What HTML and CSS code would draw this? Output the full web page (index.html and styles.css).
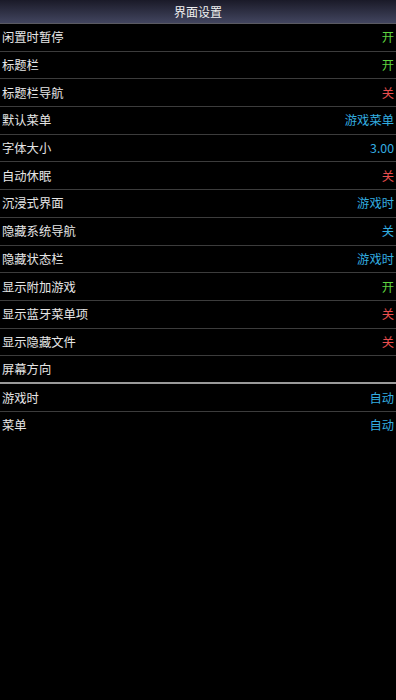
FILE: index.html
```html
<!DOCTYPE html>
<html lang="zh">
<head>
    <meta charset="UTF-8">
    <meta name="viewport" content="width=device-width, initial-scale=1.0">
    <title>界面设置</title>
    <link rel="stylesheet" href="styles.css">
</head>
<body>
    <div class="header">界面设置</div>
    <div class="list">
        <div class="row"><span class="label">闲置时暂停</span><span class="value on">开</span></div>
        <div class="row"><span class="label">标题栏</span><span class="value on">开</span></div>
        <div class="row"><span class="label">标题栏导航</span><span class="value off">关</span></div>
        <div class="row"><span class="label">默认菜单</span><span class="value info">游戏菜单</span></div>
        <div class="row"><span class="label">字体大小</span><span class="value info">3.00</span></div>
        <div class="row"><span class="label">自动休眠</span><span class="value off">关</span></div>
        <div class="row"><span class="label">沉浸式界面</span><span class="value info">游戏时</span></div>
        <div class="row"><span class="label">隐藏系统导航</span><span class="value info">关</span></div>
        <div class="row"><span class="label">隐藏状态栏</span><span class="value info">游戏时</span></div>
        <div class="row"><span class="label">显示附加游戏</span><span class="value on">开</span></div>
        <div class="row"><span class="label">显示蓝牙菜单项</span><span class="value off">关</span></div>
        <div class="row"><span class="label">显示隐藏文件</span><span class="value off">关</span></div>
        <div class="row group"><span class="label">屏幕方向</span></div>
        <div class="row"><span class="label">游戏时</span><span class="value info">自动</span></div>
        <div class="row last"><span class="label">菜单</span><span class="value info">自动</span></div>
    </div>
</body>
</html>
```

FILE: styles.css
```css
body {
    margin: 0;
    background-color: #000;
    color: #e6e6e6;
    font-family: "Noto Sans CJK SC", "Noto Sans", sans-serif;
    font-size: 12.3px;
}
.header {
    height: 23px;
    line-height: 23px;
    text-align: center;
    font-size: 12px;
    color: #f0f0f0;
    background: linear-gradient(to bottom, #1a1a28, #42455f);
    border-bottom: 1px solid #5a5a62;
}
.row {
    display: flex;
    justify-content: space-between;
    align-items: center;
    height: 26.7px;
    padding: 0 2px 0 2px;
    border-bottom: 1px solid #3c3c3c;
}
.row.group {
    border-bottom: 2px solid #9a9a9a;
    height: 26px;
}
.row.last { border-bottom: none; }
.value.on { color: #5fd33f; }
.value.off { color: #e84e4e; }
.value.info { color: #33aee0; }
```
